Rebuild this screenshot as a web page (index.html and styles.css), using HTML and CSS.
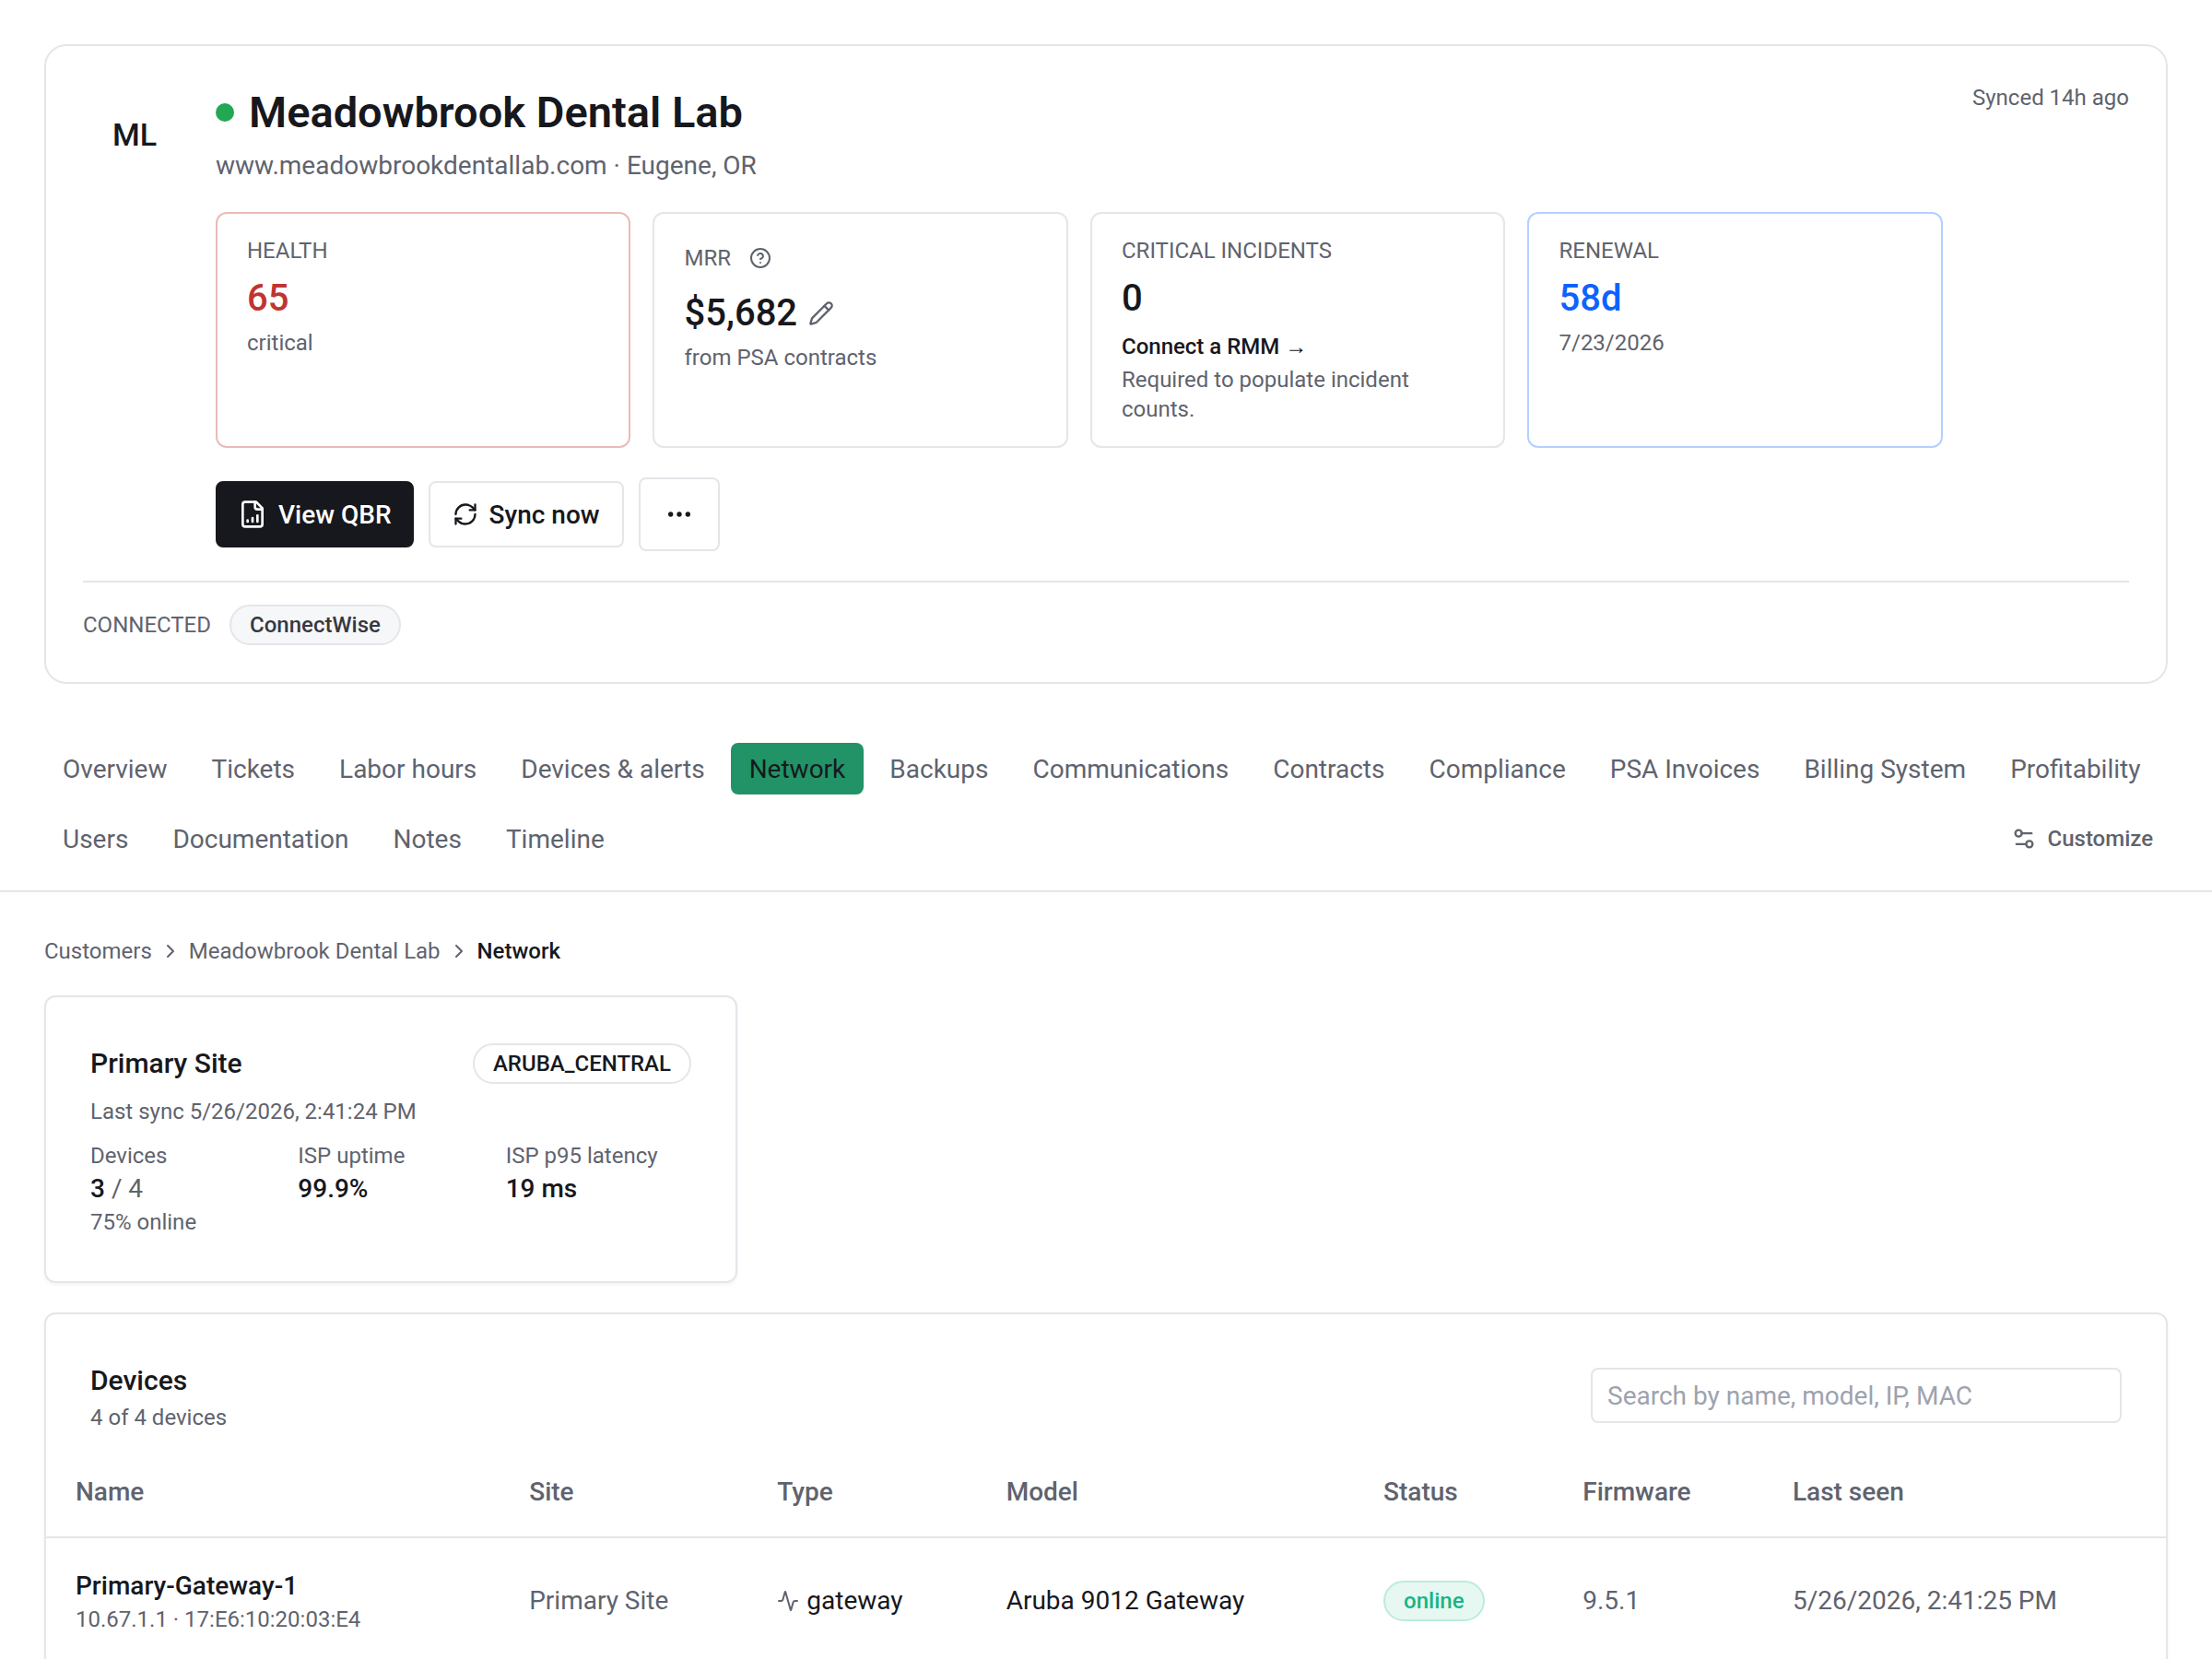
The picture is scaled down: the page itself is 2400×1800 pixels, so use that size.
FILE: index.html
```html
<!DOCTYPE html>
<html lang="en">
<head>
    <meta charset="UTF-8">
    <meta name="viewport" content="width=device-width, initial-scale=1.0">
    <title>Meadowbrook Dental Lab - Network</title>
    <link rel="stylesheet" href="styles.css">
</head>
<body>
    <header class="customer-card">
        <div class="customer-top">
            <div class="avatar">ML</div>
            <div class="customer-info">
                <div class="title-row">
                    <span class="status-dot"></span>
                    <h1>Meadowbrook Dental Lab</h1>
                </div>
                <p class="subtitle"><a href="#">www.meadowbrookdentallab.com</a> · Eugene, OR</p>

                <!-- Key numbers -->
                <div class="stats">
                    <div class="stat stat-danger">
                        <div class="stat-label">HEALTH</div>
                        <div class="stat-value">65</div>
                        <div class="stat-note">critical</div>
                    </div>
                    <div class="stat">
                        <div class="stat-label stat-label-tall">MRR
                            <button class="icon-btn" aria-label="About MRR">
                                <svg class="icon icon-sm" viewBox="0 0 24 24"><circle cx="12" cy="12" r="10"/><path d="M9.09 9a3 3 0 0 1 5.83 1c0 2-3 3-3 3"/><path d="M12 17h.01"/></svg>
                            </button>
                        </div>
                        <div class="stat-value">$5,682
                            <button class="icon-btn" aria-label="Edit MRR">
                                <svg class="icon icon-md" viewBox="0 0 24 24"><path d="M21.174 6.812a1 1 0 0 0-3.986-3.987L3.842 16.174a2 2 0 0 0-.5.83l-1.321 4.352a.5.5 0 0 0 .623.622l4.353-1.32a2 2 0 0 0 .83-.497z"/><path d="m15 5 4 4"/></svg>
                            </button>
                        </div>
                        <div class="stat-note">from PSA contracts</div>
                    </div>
                    <div class="stat">
                        <div class="stat-label">CRITICAL INCIDENTS</div>
                        <div class="stat-value">0</div>
                        <a class="stat-link" href="#">Connect a RMM →</a>
                        <div class="stat-note">Required to populate incident counts.</div>
                    </div>
                    <div class="stat stat-info">
                        <div class="stat-label">RENEWAL</div>
                        <div class="stat-value">58d</div>
                        <div class="stat-note">7/23/2026</div>
                    </div>
                </div>

                <div class="actions">
                    <button class="btn btn-primary">
                        <svg class="icon icon-lg" viewBox="0 0 24 24"><path d="M15 2H6a2 2 0 0 0-2 2v16a2 2 0 0 0 2 2h12a2 2 0 0 0 2-2V7Z"/><path d="M14 2v4a2 2 0 0 0 2 2h4"/><path d="M8 18v-1"/><path d="M12 18v-3"/><path d="M16 18v-5"/></svg>
                        View QBR
                    </button>
                    <button class="btn">
                        <svg class="icon icon-md" viewBox="0 0 24 24"><path d="M3 12a9 9 0 0 1 9-9 9.75 9.75 0 0 1 6.74 2.74L21 8"/><path d="M21 3v5h-5"/><path d="M21 12a9 9 0 0 1-9 9 9.75 9.75 0 0 1-6.74-2.74L3 16"/><path d="M8 16H3v5"/></svg>
                        Sync now
                    </button>
                    <button class="btn btn-more" aria-label="More actions">
                        <svg class="icon icon-lg" viewBox="0 0 24 24"><circle cx="5" cy="12" r="1"/><circle cx="12" cy="12" r="1"/><circle cx="19" cy="12" r="1"/></svg>
                    </button>
                </div>
            </div>
            <div class="synced">Synced 14h ago</div>
        </div>
        <div class="connected">
            <span>CONNECTED</span>
            <span class="pill pill-gray">ConnectWise</span>
        </div>
    </header>

    <nav class="tabs">
        <a href="#">Overview</a>
        <a href="#">Tickets</a>
        <a href="#">Labor hours</a>
        <a href="#">Devices &amp; alerts</a>
        <a href="#" class="active">Network</a>
        <a href="#">Backups</a>
        <a href="#">Communications</a>
        <a href="#">Contracts</a>
        <a href="#">Compliance</a>
        <a href="#">PSA Invoices</a>
        <a href="#">Billing System</a>
        <a href="#">Profitability</a>
        <a href="#">Users</a>
        <a href="#">Documentation</a>
        <a href="#">Notes</a>
        <a href="#">Timeline</a>
        <button class="customize">
            <svg class="icon icon-md" viewBox="0 0 24 24"><path d="M14 17H5"/><path d="M19 7h-9"/><circle cx="17" cy="17" r="3"/><circle cx="7" cy="7" r="3"/></svg>
            Customize
        </button>
    </nav>

    <main>
        <div class="breadcrumb">
            <a href="#">Customers</a>
            <svg class="icon icon-sm" viewBox="0 0 24 24"><path d="m9 18 6-6-6-6"/></svg>
            <a href="#">Meadowbrook Dental Lab</a>
            <svg class="icon icon-sm" viewBox="0 0 24 24"><path d="m9 18 6-6-6-6"/></svg>
            <span class="current">Network</span>
        </div>

        <!-- Sites -->
        <div class="sites">
            <section class="card">
                <div class="card-head">
                    <h2>Primary Site</h2>
                    <span class="pill">ARUBA_CENTRAL</span>
                </div>
                <p class="last-sync">Last sync 5/26/2026, 2:41:24 PM</p>
                <div class="site-stats">
                    <div>
                        <div class="small">Devices</div>
                        <div class="number">3 <span class="total">/ 4</span></div>
                        <div class="small">75% online</div>
                    </div>
                    <div>
                        <div class="small">ISP uptime</div>
                        <div class="number">99.9%</div>
                    </div>
                    <div>
                        <div class="small">ISP p95 latency</div>
                        <div class="number">19 ms</div>
                    </div>
                </div>
            </section>
        </div>

        <!-- Devices -->
        <section class="card devices">
            <div class="devices-head">
                <div>
                    <h2>Devices</h2>
                    <p class="small">4 of 4 devices</p>
                </div>
                <input type="text" class="search" aria-label="Search devices" placeholder="Search by name, model, IP, MAC">
            </div>
            <table>
                <colgroup>
                    <col class="col-name">
                    <col class="col-site">
                    <col class="col-type">
                    <col class="col-model">
                    <col class="col-status">
                    <col class="col-firmware">
                    <col class="col-seen">
                </colgroup>
                <thead>
                    <tr>
                        <th>Name</th>
                        <th>Site</th>
                        <th>Type</th>
                        <th>Model</th>
                        <th>Status</th>
                        <th>Firmware</th>
                        <th>Last seen</th>
                    </tr>
                </thead>
                <tbody>
                    <tr>
                        <td>
                            <div class="device-name">Primary-Gateway-1</div>
                            <div class="small">10.67.1.1 · 17:E6:10:20:03:E4</div>
                        </td>
                        <td class="muted">Primary Site</td>
                        <td>
                            <div class="type">
                                <svg class="icon icon-sm" viewBox="0 0 24 24"><path d="M22 12h-2.48a2 2 0 0 0-1.93 1.46l-2.35 8.36a.25.25 0 0 1-.48 0L9.24 2.18a.25.25 0 0 0-.48 0l-2.35 8.36A2 2 0 0 1 4.49 12H2"/></svg>
                                gateway
                            </div>
                        </td>
                        <td>Aruba 9012 Gateway</td>
                        <td><span class="pill pill-online">online</span></td>
                        <td class="muted">9.5.1</td>
                        <td class="muted">5/26/2026, 2:41:25 PM</td>
                    </tr>
                </tbody>
            </table>
        </section>
    </main>
</body>
</html>
```

FILE: styles.css
```css
* {
    box-sizing: border-box;
}

body {
    font-family: Roboto, "Liberation Sans", sans-serif;
    font-size: 28px;
    line-height: 40px;
    color: #17181d;
    background-color: #fff;
    margin: 0;
    height: 100vh;
    overflow: hidden;
}

h1, h2, p {
    margin: 0;
}

a {
    color: inherit;
    text-decoration: none;
}

button, input {
    font-family: inherit;
    color: inherit;
}

button {
    cursor: pointer;
}

.icon {
    fill: none;
    stroke: currentColor;
    stroke-width: 2;
    stroke-linecap: round;
    stroke-linejoin: round;
    flex-shrink: 0;
}

.icon-sm {
    width: 24px;
    height: 24px;
}

.icon-md {
    width: 28px;
    height: 28px;
}

.icon-lg {
    width: 32px;
    height: 32px;
}

.icon-btn {
    display: flex;
    padding: 0;
    border: none;
    background: none;
    color: #5f636e;
}

/* Customer header */
.customer-card {
    margin: 48px 48px 0;
    padding: 40px;
    border: 2px solid #e5e5ea;
    border-radius: 24px;
}

.customer-top {
    display: flex;
    gap: 32px;
    padding-bottom: 32px;
    border-bottom: 2px solid #e5e5ea;
}

.avatar {
    display: flex;
    align-items: center;
    justify-content: center;
    width: 112px;
    height: 112px;
    font-size: 34px;
    font-weight: 500;
}

.customer-info {
    flex: 1;
}

.title-row {
    display: flex;
    align-items: center;
    gap: 16px;
}

.status-dot {
    width: 20px;
    height: 20px;
    border-radius: 50%;
    background-color: #22a854;
}

h1 {
    font-size: 47px;
    font-weight: 600;
    line-height: 64px;
}

.subtitle {
    margin-top: 6px;
    color: #5f636e;
}

.stats {
    display: grid;
    grid-template-columns: repeat(4, 1fr);
    gap: 24px;
    margin-top: 30px;
}

.stat {
    padding: 24px 32px;
    border: 2px solid #e5e5ea;
    border-radius: 12px;
}

.stat-danger {
    border-color: #eabbb8;
}

.stat-danger .stat-value {
    color: #c03530;
}

.stat-info {
    border-color: #b3d0ff;
}

.stat-info .stat-value {
    color: #0f62fe;
}

.stat-label, .stat-note, .stat-link, .small, .last-sync, .synced, .connected, .breadcrumb {
    font-size: 24px;
    line-height: 32px;
    color: #5f636e;
}

.stat-label-tall {
    display: flex;
    align-items: center;
    gap: 20px;
    height: 48px;
}

.stat-value {
    display: flex;
    align-items: center;
    gap: 12px;
    margin: 8px 0 4px;
    font-size: 40px;
    font-weight: 500;
    line-height: 56px;
}

.stat-link {
    display: block;
    margin: 8px 0 4px;
    font-weight: 500;
    color: #17181d;
}

.actions {
    display: flex;
    align-items: center;
    gap: 16px;
    margin-top: 32px;
}

.btn {
    display: flex;
    align-items: center;
    gap: 12px;
    height: 72px;
    padding: 0 24px;
    border: 2px solid #e5e5ea;
    border-radius: 8px;
    background-color: #fff;
    font-size: 28px;
    font-weight: 500;
}

.btn-primary {
    border-color: #17181d;
    padding: 0 22px;
    background-color: #17181d;
    color: #fff;
}

.btn-more {
    justify-content: center;
    width: 88px;
    height: 80px;
}

.synced {
    flex: 0 0 168px;
    display: flex;
    justify-content: flex-end;
    white-space: nowrap;
}

.connected {
    display: flex;
    align-items: center;
    gap: 20px;
    margin-top: 24px;
}

.pill {
    display: inline-block;
    height: 44px;
    padding: 4px 20px;
    border: 2px solid #e5e5ea;
    border-radius: 22px;
    font-size: 24px;
    font-weight: 500;
    line-height: 32px;
    color: #17181d;
}

.pill-gray {
    background-color: #f6f7f9;
    color: #363841;
}

.pill-online {
    border-color: #bcebdc;
    background-color: #e7f7f1;
    color: #16b586;
}

/* Tabs */
.tabs {
    display: flex;
    flex-wrap: wrap;
    gap: 20px 8px;
    margin-top: 64px;
    padding: 0 48px 28px;
    border-bottom: 2px solid #e5e5ea;
}

.tabs a {
    padding: 9px 20px 7px;
    border-radius: 8px;
    color: #5f636e;
}

.tabs .active {
    background-color: #219366;
    color: #17181d;
}

.customize {
    display: flex;
    align-items: center;
    gap: 12px;
    margin-left: auto;
    padding: 0 16px;
    border: none;
    background: none;
    font-size: 24px;
    font-weight: 500;
    color: #5f636e;
}

main {
    padding: 48px;
}

.breadcrumb {
    display: flex;
    align-items: center;
    gap: 8px;
}

.breadcrumb .current {
    font-weight: 500;
    color: #17181d;
}

/* Site cards */
.sites {
    display: grid;
    grid-template-columns: repeat(3, 1fr);
    gap: 24px;
    margin: 32px 0;
}

.card {
    padding: 48px;
    border: 2px solid #e5e5ea;
    border-radius: 12px;
    box-shadow: 0 2px 4px rgba(0, 0, 0, 0.05);
}

.card-head, .devices-head {
    display: flex;
    align-items: center;
    justify-content: space-between;
}

h2 {
    font-size: 30px;
    font-weight: 500;
    line-height: 48px;
}

.last-sync {
    margin: 12px 0 16px;
}

.site-stats {
    display: grid;
    grid-template-columns: repeat(3, 1fr);
    gap: 24px;
}

.number {
    font-weight: 500;
}

.total {
    font-weight: 400;
    color: #5f636e;
}

/* Devices table */
.devices {
    padding: 48px 0 0;
}

.devices-head {
    padding: 0 48px 16px;
}

.search {
    width: 576px;
    height: 60px;
    padding: 0 16px;
    border: 2px solid #e5e5ea;
    border-radius: 8px;
    font-size: 28px;
}

.search::placeholder {
    color: #9ca3af;
}

table {
    width: 100%;
    table-layout: fixed;
    border-collapse: collapse;
}

.col-name {
    width: 21.4%;
}

.col-site {
    width: 11.7%;
}

.col-type {
    width: 10.8%;
}

.col-model {
    width: 17.8%;
}

.col-status {
    width: 9.4%;
}

.col-firmware {
    width: 9.9%;
}

th {
    height: 98px;
    padding: 0 32px;
    border-bottom: 2px solid #e5e5ea;
    font-weight: 500;
    text-align: left;
    color: #5f636e;
}

td {
    padding: 32px;
    border-bottom: 2px solid #e5e5ea;
    white-space: nowrap;
}

.device-name {
    font-weight: 500;
}

.muted {
    color: #5f636e;
}

.type {
    display: flex;
    align-items: center;
    gap: 8px;
}

.type .icon {
    color: #5f636e;
}
```
